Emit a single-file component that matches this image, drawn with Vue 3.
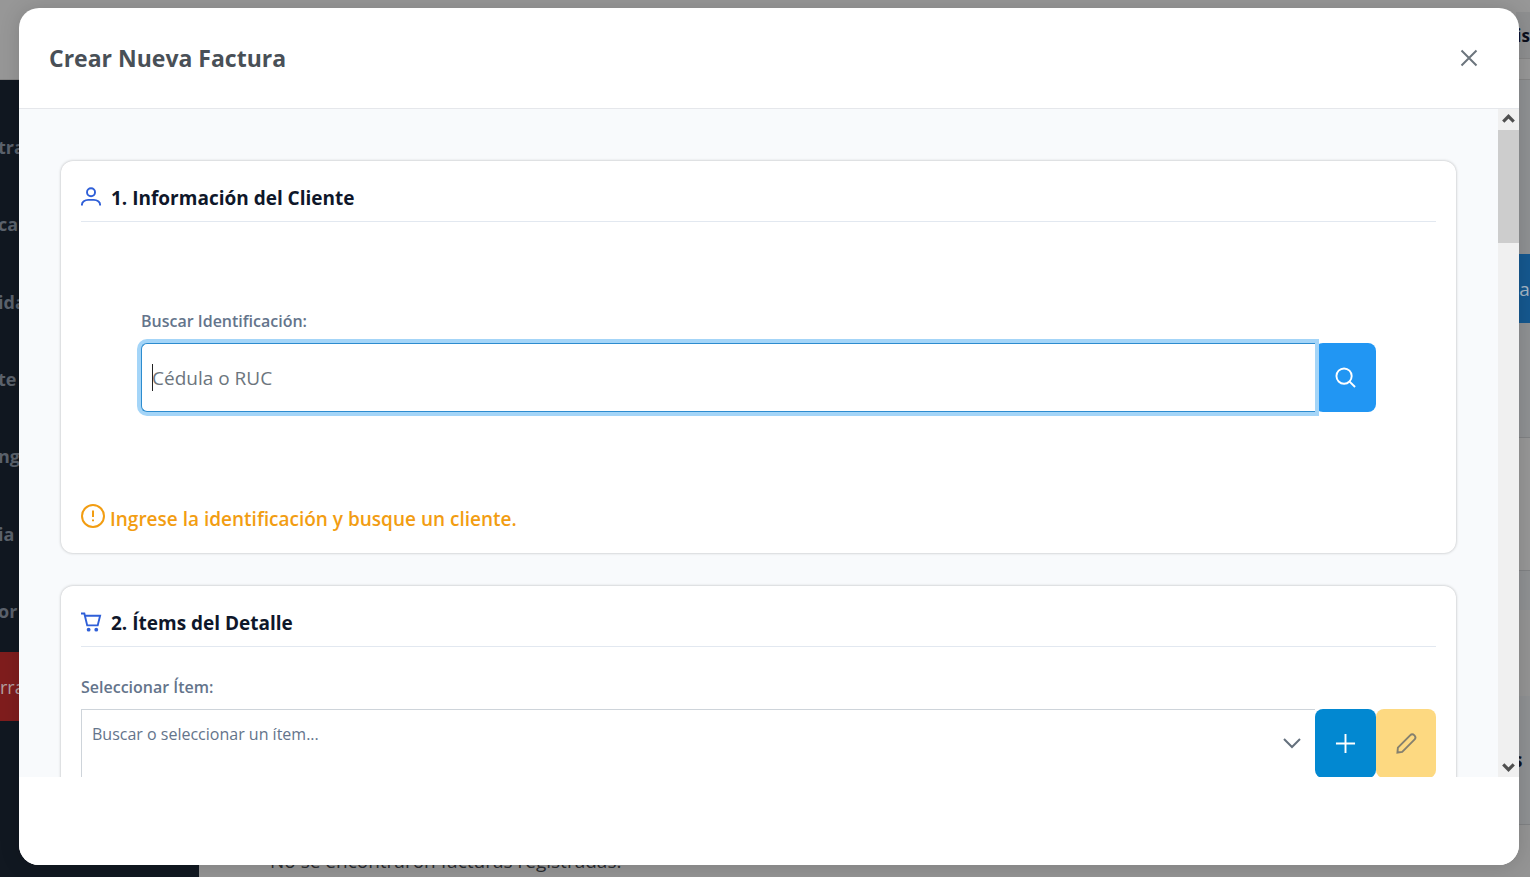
<script setup>
import { ref } from 'vue'

const menu = ['tra', 'cap', 'ida', 'te', 'ng', 'ia', 'or']
const identification = ref('')
const item = ref('')
</script>

<template>
  <div class="page">
    <header class="topbar">
      <div class="user"><span>is</span></div>
    </header>
    <div class="shell">
      <aside class="sidebar">
        <nav>
          <a v-for="entry in menu" :key="entry" href="#">{{ entry }}</a>
        </nav>
        <button class="logout" type="button">rra</button>
      </aside>
      <main class="main">
        <div class="tools"><button type="button" class="create">a</button></div>
        <div class="band filters"></div>
        <div class="band gap"></div>
        <div class="band caption"></div>
        <div class="band columns"><span>s</span></div>
        <p class="empty">No se encontraron facturas registradas.</p>
      </main>
    </div>

    <div class="overlay">
      <section class="dialog" role="dialog" aria-labelledby="dialog-title">
        <header class="dialog-head">
          <h1 id="dialog-title">Crear Nueva Factura</h1>
          <button type="button" class="close" aria-label="Cerrar">
            <svg viewBox="0 0 20 20"><path d="M2.5 2.5 17.5 17.5M17.5 2.5 2.5 17.5" /></svg>
          </button>
        </header>

        <div class="dialog-body">
          <div class="content">
            <section class="card client">
              <h2>
                <svg viewBox="0 0 22 22"><circle cx="10.500" cy="5.500" r="4.200" /><path d="M1 19.500v-1.200c0-2.600 3-4.800 6.500-4.800h6c3.500 0 6.500 2.200 6.500 4.800v1.200" /></svg>
                <span>1. Información del Cliente</span>
              </h2>
              <div class="search">
                <label for="identification">Buscar Identificación:</label>
                <div class="group">
                  <div class="field">
                    <input id="identification" v-model="identification" type="text" placeholder="Cédula o RUC" />
                    <i class="caret"></i>
                  </div>
                  <button type="button" class="action find" aria-label="Buscar">
                    <svg viewBox="0 0 22 22"><circle cx="9.500" cy="9.500" r="8" /><path d="m15.300 15.300 5.700 5.700" /></svg>
                  </button>
                </div>
              </div>
              <p class="notice">
                <svg viewBox="0 0 24 24"><circle cx="12" cy="12" r="11" /><path d="M12 6.500v6.500M12 15.500v1.700" /></svg>
                <span>Ingrese la identificación y busque un cliente.</span>
              </p>
            </section>

            <section class="card">
              <h2>
                <svg viewBox="0 0 22 22"><path d="M0 1.500h3.500l3 12.500h11L20 4H4.200" /><circle class="dot" cx="8" cy="18.500" r="2" /><circle class="dot" cx="16" cy="18.500" r="2" /></svg>
                <span>2. Ítems del Detalle</span>
              </h2>
              <div class="picker">
                <label for="item">Seleccionar Ítem:</label>
                <div class="group">
                  <div class="field">
                    <select id="item" v-model="item">
                      <option value="">Buscar o seleccionar un ítem...</option>
                    </select>
                    <svg class="chevron" viewBox="0 0 20 20"><path d="m2 6 8 8 8-8" /></svg>
                  </div>
                  <button type="button" class="action add" aria-label="Agregar ítem">
                    <svg viewBox="0 0 22 22"><path d="M11 1v20M1 11h20" /></svg>
                  </button>
                  <button type="button" class="action edit" aria-label="Editar ítem">
                    <svg viewBox="0 0 22 22"><path d="M1.500 20.500 2 15.300 14.800 2.500c1.200-1.200 3.200-1.200 4.500 0 1.200 1.300 1.200 3.300 0 4.500L6.500 19.800Z" /></svg>
                  </button>
                </div>
              </div>
            </section>
          </div>

          <div class="scroller">
            <svg viewBox="0 0 20 20"><path d="m5 12 5-5 5 5" /></svg>
            <div class="thumb"></div>
            <div class="track"></div>
            <svg viewBox="0 0 20 20"><path d="m5 8 5 5 5-5" /></svg>
          </div>
        </div>

        <footer class="dialog-foot"></footer>
      </section>
    </div>
  </div>
</template>

<style>
html, body, #app { height: 100%; }
body { margin: 0; overflow: hidden; }
</style>

<style scoped>
* { box-sizing: border-box; }
.page {
  position: relative;
  display: flex;
  flex-direction: column;
  height: 100%;
  overflow: hidden;
  background: #979797;
  font-family: "Open Sans", "Noto Sans", sans-serif;
  font-size: 19px;
}
h1, h2, p { margin: 0; }
button { border: 0; padding: 0; font: inherit; cursor: pointer; }
svg { fill: none; stroke: currentColor; stroke-width: 2; flex: none; }

.topbar {
  flex: none;
  display: flex;
  justify-content: flex-end;
  height: 80px;
  padding-top: 12px;
  border-bottom: 1px solid #858585;
}
.user {
  display: flex;
  justify-content: flex-end;
  width: 14px;
  height: 47px;
  border-bottom: 1px solid #858585;
  background: #8e8f90;
  color: #0c0f1c;
  font-size: 17px;
  font-weight: 700;
  line-height: 47px;
}
.shell { flex: 1; display: flex; min-height: 0; }
.sidebar { flex: none; width: 199px; background: #111821; }
.sidebar nav {
  display: flex;
  flex-direction: column;
  height: 572px;
  margin-left: -2px;
  padding: 28px 0 2px;
}
.sidebar a {
  flex: 1;
  display: flex;
  align-items: center;
  color: #5b626c;
  font-size: 18px;
  font-weight: 700;
  text-decoration: none;
}
.logout {
  width: 100%;
  height: 69px;
  background: #7f1d1d;
  color: #b3a0a0;
  text-align: left;
  font-size: 18px;
}
.main { flex: 1; background: #8f9193; overflow: hidden; }
.tools {
  display: flex;
  justify-content: flex-end;
  height: 357px;
  padding-top: 174px;
}
.create {
  width: 11px;
  height: 69px;
  overflow: hidden;
  background: #15588f;
  color: #a5b6c5;
}
.band { border-top: 1px solid #808284; }
.filters { height: 133px; background: #979797; }
.gap { height: 40px; }
.caption { height: 86px; border: 0; background: #949494; }
.columns {
  display: flex;
  justify-content: flex-end;
  align-items: center;
  height: 128px;
  border: 0;
  color: #0c0f1c;
  font-weight: 700;
}
.columns span { width: 17px; }
.empty {
  height: 60px;
  padding: 22px 71px;
  border-top: 1px solid #808284;
  background: #949494;
  color: #2a2c30;
  line-height: 28px;
}

.overlay {
  position: absolute;
  inset: 0;
  display: flex;
  padding: 8px 11px 12px 19px;
}
.dialog {
  flex: 1;
  display: flex;
  flex-direction: column;
  min-width: 0;
  overflow: hidden;
  border-radius: 20px;
  background: #fff;
  box-shadow: 0 1px 20px rgba(0, 0, 0, 0.15);
}
.dialog-head {
  flex: none;
  display: flex;
  align-items: center;
  justify-content: space-between;
  height: 101px;
  padding: 0 40px 0 30px;
  border-bottom: 1px solid #e5e7eb;
  color: #495057;
}
h1 { font-size: 23px; font-weight: 700; line-height: 32px; }
.close { display: flex; background: none; color: #6c757d; }
.close svg { width: 20px; height: 20px; }
.dialog-body { flex: 1; display: flex; min-height: 0; overflow: hidden; }
.content {
  flex: 1;
  display: flex;
  flex-direction: column;
  gap: 33px;
  min-width: 0;
  padding: 52px 42px 0;
  background: #f8fafc;
}
.card {
  flex: none;
  padding: 19px 20px;
  border-radius: 12px;
  background: #fff;
  box-shadow: 0 0 3px rgba(0, 0, 0, 0.28);
}
.client { height: 392px; }
h2 {
  display: flex;
  align-items: center;
  gap: 9px;
  height: 42px;
  padding-bottom: 6px;
  border-bottom: 1px solid #e2e8f0;
  color: #0f172a;
  font-size: 19px;
  font-weight: 700;
}
h2 svg { width: 21px; height: 21px; color: #2f5fd8; }
.dot { fill: currentColor; stroke: none; }
.search { padding: 88px 60px; }
.picker { padding-top: 29px; }
label {
  display: block;
  height: 33px;
  color: #64748b;
  font-size: 16px;
  font-weight: 600;
  line-height: 22px;
}
.group { display: flex; height: 69px; }
.field { position: relative; flex: 1; min-width: 0; }
input, select {
  display: block;
  width: 100%;
  height: 100%;
  margin: 0;
  font-family: inherit;
  outline: 0;
  background: #fff;
}
input {
  position: relative;
  z-index: 1;
  padding: 0 10px;
  border: 1px solid #2d8ccf;
  border-right: 0;
  border-radius: 6px 0 0 6px;
  box-shadow: 0 0 0 4px #a4d5f8;
  color: #495057;
  font-size: 19px;
}
input::placeholder { color: #6c757d; opacity: 1; }
.caret {
  position: absolute;
  z-index: 2;
  left: 11px;
  top: 21px;
  width: 1px;
  height: 27px;
  background: #222;
}
select {
  appearance: none;
  padding: 0 50px 20px 10px;
  border: 1px solid #ced4da;
  border-width: 1px 0 0 1px;
  border-radius: 0;
  color: #64748b;
  font-size: 16px;
}
.chevron {
  position: absolute;
  right: 13px;
  top: 24px;
  width: 20px;
  height: 20px;
  color: #64707d;
  pointer-events: none;
}
.action {
  flex: none;
  display: flex;
  align-items: center;
  justify-content: center;
  width: 61px;
  border-radius: 8px;
  color: #fff;
}
.action svg { width: 21px; height: 21px; }
.find { background: #2196f3; }
.add { background: #0288d1; }
.edit { width: 60px; background: #fdd981; color: #85806e; }
.notice {
  display: flex;
  align-items: flex-start;
  gap: 5px;
  margin-top: 4px;
  color: #f29d12;
  font-weight: 600;
  line-height: 30px;
}
.notice svg { width: 24px; height: 24px; }
.scroller {
  flex: none;
  display: flex;
  flex-direction: column;
  width: 21px;
  background: #f0f0f0;
  color: #505050;
}
.scroller svg { width: 21px; height: 21px; stroke-width: 3; }
.thumb { height: 113px; background: #cdcdcd; }
.track { flex: 1; }
.dialog-foot { flex: none; height: 88px; background: #fff; }
</style>
